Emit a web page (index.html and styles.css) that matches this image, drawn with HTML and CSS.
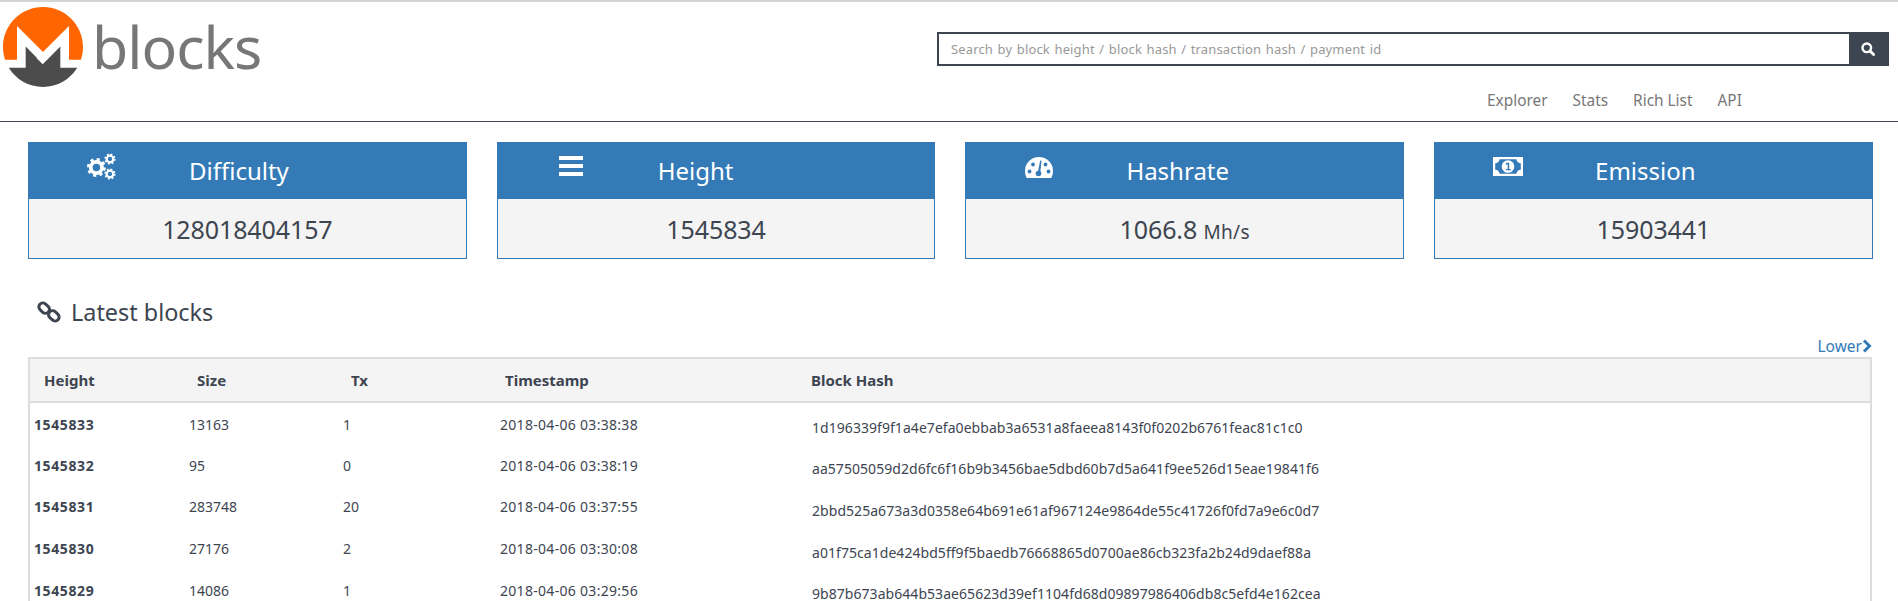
FILE: index.html
```html
<!DOCTYPE html>
<html lang="en">
<head>
<meta charset="utf-8">
<title>Monero blocks</title>
<link rel="stylesheet" href="styles.css">
</head>
<body>
<div class="page">
  <header class="site-header">
    <a class="brand" href="#">
      <svg class="logo" viewBox="0 0 256 256" aria-hidden="true">
        <path fill="#ff6600" d="M127.998 0C57.318 0 0 57.317 0 127.999c0 14.127 2.29 27.716 6.518 40.43H44.8V60.733l83.2 83.2 83.198-83.2v107.695h38.282c4.231-12.714 6.52-26.303 6.52-40.43C256 57.314 198.68 0 127.998 0"/>
        <path fill="#4c4c4c" d="M108.867 163.062l-36.31-36.311v67.765H18.623c22.47 36.863 63.051 61.48 109.373 61.48s86.907-24.617 109.374-61.48h-53.933V126.75l-36.31 36.31-20.13 20.129-20.129-20.128z"/>
      </svg>
      <span class="brand-name">blocks</span>
    </a>
    <div class="header-right">
      <form class="search">
        <input class="search-input" type="text" placeholder="Search by block height / block hash / transaction hash / payment id">
        <button class="search-button" type="button" aria-label="Search">
          <svg class="search-icon" viewBox="0 0 14 14"><circle cx="5.8" cy="5.8" r="4.3" fill="none" stroke="#fff" stroke-width="2.4"/><path d="M9 9l3.6 3.6" stroke="#fff" stroke-width="2.8" stroke-linecap="round"/></svg>
        </button>
      </form>
      <nav class="nav">
        <a href="#">Explorer</a>
        <a href="#">Stats</a>
        <a href="#">Rich List</a>
        <a href="#">API</a>
      </nav>
    </div>
  </header>

  <section class="cards">
    <article class="card">
      <div class="card-head">
        <svg class="card-icon icon-cogs" viewBox="0 0 32 28">
          <g transform="translate(10 15)"><circle r="6" fill="none" stroke="#fff" stroke-width="4"/><circle r="8.500" fill="none" stroke="#fff" stroke-width="3.200" stroke-dasharray="3.300 3.376"/></g>
          <g transform="translate(24.500 6)"><circle r="3.500" fill="none" stroke="#fff" stroke-width="2.400"/><circle r="5" fill="none" stroke="#fff" stroke-width="2" stroke-dasharray="1.900 2.027"/></g>
          <g transform="translate(24.500 22)"><circle r="3.500" fill="none" stroke="#fff" stroke-width="2.400"/><circle r="5" fill="none" stroke="#fff" stroke-width="2" stroke-dasharray="1.900 2.027"/></g>
        </svg>
        <h2 class="card-title">Difficulty</h2>
      </div>
      <div class="card-value">128018404157</div>
    </article>
    <article class="card">
      <div class="card-head">
        <svg class="card-icon icon-bars" viewBox="0 0 24 20"><path fill="#fff" d="M0 0h24v4H0zM0 8h24v4H0zM0 16h24v4H0z"/></svg>
        <h2 class="card-title">Height</h2>
      </div>
      <div class="card-value">1545834</div>
    </article>
    <article class="card">
      <div class="card-head">
        <svg class="card-icon icon-gauge" viewBox="0 0 28 21">
          <path fill="#fff" d="M14 0A14 14 0 0 0 0 14c0 2.600.6 5 1.800 7h24.400c1.200-2 1.800-4.400 1.800-7A14 14 0 0 0 14 0z"/>
          <g fill="#337ab7"><circle cx="4.500" cy="14.500" r="1.900"/><circle cx="8" cy="7.500" r="1.900"/><circle cx="20.500" cy="7.500" r="1.900"/><circle cx="23.500" cy="14.500" r="1.900"/><circle cx="13.500" cy="16.500" r="2.800"/><path d="M15.200 3.500l1.300.2-1.300 12.500-2.400-.6z"/></g>
        </svg>
        <h2 class="card-title">Hashrate</h2>
      </div>
      <div class="card-value">1066.8 <small class="unit">Mh/s</small></div>
    </article>
    <article class="card">
      <div class="card-head">
        <svg class="card-icon icon-money" viewBox="0 0 30 19">
          <path fill="#fff" fill-rule="evenodd" d="M0 0h30v19H0zM6.500 2.200c0 2.200-1.800 4-4.300 4v6.600c2.500 0 4.300 1.800 4.300 4h17c0-2.200 1.800-4 4.300-4V6.200c-2.500 0-4.300-1.800-4.300-4z"/>
          <circle cx="15" cy="9.500" r="6.300" fill="#fff"/>
          <path fill="#337ab7" d="M13.600 5.800h2.600v6.200h1.500v1.200h-4.700V12h1.700V7.300l-1.500.6-.4-1.100z"/>
        </svg>
        <h2 class="card-title">Emission</h2>
      </div>
      <div class="card-value">15903441</div>
    </article>
  </section>

  <h1 class="section-title">
    <svg class="chain" viewBox="0 0 24 24"><g fill="none" stroke="#3d4551" stroke-width="3"><rect x="1.500" y="4" width="11.500" height="8" rx="4" transform="rotate(42 7 8)"/><rect x="11" y="12" width="11.500" height="8" rx="4" transform="rotate(42 17 16)"/></g></svg>
    Latest blocks
  </h1>

  <div class="pager"><a class="pager-link" href="#">Lower<svg class="chevron" viewBox="0 0 10 14"><path d="M2 1.500L7.500 7 2 12.500" fill="none" stroke="#337ab7" stroke-width="3"/></svg></a></div>

  <table class="blocks">
    <thead>
      <tr><th>Height</th><th>Size</th><th>Tx</th><th>Timestamp</th><th>Block Hash</th></tr>
    </thead>
    <tbody>
      <tr><td>1545833</td><td>13163</td><td>1</td><td>2018-04-06 03:38:38</td><td>1d196339f9f1a4e7efa0ebbab3a6531a8faeea8143f0f0202b6761feac81c1c0</td></tr>
      <tr><td>1545832</td><td>95</td><td>0</td><td>2018-04-06 03:38:19</td><td>aa57505059d2d6fc6f16b9b3456bae5dbd60b7d5a641f9ee526d15eae19841f6</td></tr>
      <tr><td>1545831</td><td>283748</td><td>20</td><td>2018-04-06 03:37:55</td><td>2bbd525a673a3d0358e64b691e61af967124e9864de55c41726f0fd7a9e6c0d7</td></tr>
      <tr><td>1545830</td><td>27176</td><td>2</td><td>2018-04-06 03:30:08</td><td>a01f75ca1de424bd5ff9f5baedb76668865d0700ae86cb323fa2b24d9daef88a</td></tr>
      <tr><td>1545829</td><td>14086</td><td>1</td><td>2018-04-06 03:29:56</td><td>9b87b673ab644b53ae65623d39ef1104fd68d09897986406db8c5efd4e162cea</td></tr>
    </tbody>
  </table>
</div>
</body>
</html>
```

FILE: styles.css
```css
html, body {
  margin: 0;
  padding: 0;
  background: #fff;
}
body {
  font-family: "Noto Sans", "DejaVu Sans", sans-serif;
  color: #3d4551;
}
a { text-decoration: none; }
.page {
  height: 601px;
  overflow: hidden;
  border-top: 2px solid #d4d4d4;
  box-sizing: border-box;
}
.site-header {
  display: flex;
  justify-content: space-between;
  height: 119px;
  border-bottom: 1px solid #3d4551;
}
.brand {
  display: flex;
  align-items: flex-start;
  padding: 5px 0 0 3px;
}
.logo { width: 80px; height: 80px; }
.brand-name {
  margin-left: 9px;
  font-size: 59px;
  line-height: 78px;
  color: #777;
  letter-spacing: -1px;
}
.header-right {
  width: 952px;
  margin-right: 9px;
  padding-top: 30px;
}
.search {
  display: flex;
  height: 34px;
  border: 2px solid #3d4551;
  box-sizing: border-box;
}
.search-input {
  flex: 1;
  min-width: 0;
  border: 0;
  outline: 0;
  padding: 0 12px;
  font: 13px "Noto Sans", sans-serif;
  letter-spacing: .15px;
  word-spacing: 1px;
  color: #555;
}
.search-input::placeholder { color: #999; opacity: 1; }
.search-button {
  width: 38px;
  border: 0;
  padding: 0;
  background: #3d4551;
  display: flex;
  align-items: center;
  justify-content: center;
}
.search-icon { width: 14px; height: 14px; }
.nav {
  display: flex;
  gap: 25px;
  margin: 25px 0 0 550px;
  font-size: 15.400px;
  line-height: 20px;
}
.nav a { color: #777; }
.cards {
  display: grid;
  grid-template-columns: repeat(4, 438.7px);
  column-gap: 30px;
  margin: 20px 0 0 28px;
}
.card {
  border: 1px solid #337ab7;
  background: #f4f4f4;
  height: 117px;
  box-sizing: border-box;
}
.card-head {
  position: relative;
  height: 56px;
  box-sizing: border-box;
  padding: 0 0 2px 160px;
  background: #337ab7;
  display: flex;
  align-items: center;
}
.card-title {
  margin: 0;
  font-size: 24px;
  font-weight: 400;
  color: #fff;
}
.card-icon { position: absolute; }
.icon-cogs { left: 58px; top: 10px; width: 30px; height: 27px; }
.icon-bars { left: 61px; top: 13px; width: 24px; height: 20px; }
.icon-gauge { left: 59px; top: 14px; width: 28px; height: 21px; }
.icon-money { left: 58px; top: 14px; width: 30px; height: 19px; }
.card-value {
  text-align: center;
  font-size: 25px;
  line-height: 60px;
  letter-spacing: -.1px;
  color: #3d4551;
}
.unit { font-size: 19px; letter-spacing: .3px; }
.section-title {
  display: flex;
  align-items: center;
  gap: 10px;
  margin: 33px 0 0 37px;
  height: 40px;
  font-size: 23.400px;
  font-weight: 400;
  color: #3d4551;
}
.chain { width: 24px; height: 24px; }
.pager {
  display: flex;
  justify-content: flex-end;
  margin: 0 26px 0 0;
  height: 25px;
  padding-top: 2px;
  box-sizing: border-box;
}
.pager-link {
  display: flex;
  align-items: center;
  color: #337ab7;
  font-size: 15.500px;
  line-height: 20px;
}
.chevron { width: 10px; height: 14px; }
.blocks {
  width: 1844px;
  margin-left: 28px;
  table-layout: fixed;
  border-collapse: collapse;
  border: 2px solid #ddd;
  border-bottom: 0;
  font-size: 14px;
}
.blocks th {
  box-sizing: border-box;
  height: 44px;
  padding: 0 0 0 14px;
  text-align: left;
  font-size: 15px;
  font-weight: 700;
  background: #f4f4f4;
  border-bottom: 2px solid #ddd;
  width: 154px;
}
.blocks th:nth-child(4) { width: 306px; }
.blocks th:nth-child(5) { width: auto; }
.blocks td {
  height: 41.600px;
  padding: 2px 0 0 6px;
  box-sizing: border-box;
  color: #3d4551;
}
.blocks td:nth-child(1) { font-weight: 700; padding-left: 4px; letter-spacing: .6px; }
.blocks td:nth-child(4) { padding-left: 9px; letter-spacing: .3px; }
.blocks td:nth-child(5) { padding: 9px 0 0 15px; letter-spacing: .05px; }
```
